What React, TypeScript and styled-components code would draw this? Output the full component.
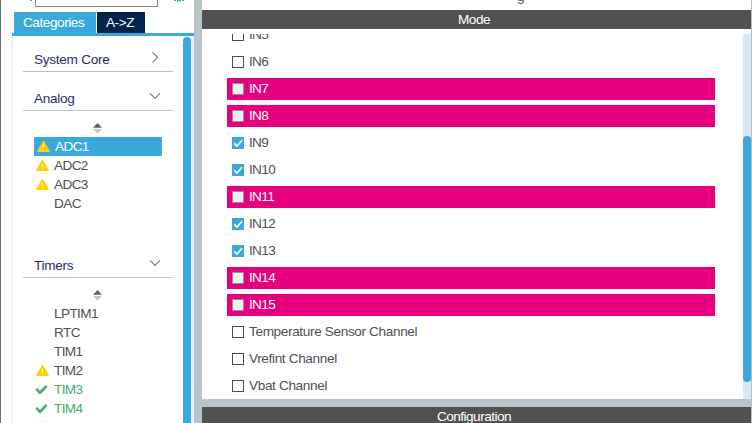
import React from "react";
import styled, { createGlobalStyle } from "styled-components";

const GlobalStyle = createGlobalStyle`
  * { box-sizing: border-box; }
  body { margin: 0; background: #fff; overflow: hidden; }
`;

const Shell = styled.div`
  display: flex;
  width: 752px;
  height: 423px;
  overflow: hidden;
  background: #fff;
  border-left: 1px solid #6d6d70;
  font-family: "Liberation Sans", Arial, sans-serif;
  font-size: 13.6px;
  line-height: 19px;
  color: #505054;
  white-space: nowrap;
`;

const Sidebar = styled.aside`
  display: flex;
  flex-direction: column;
  width: 193px;
  padding-left: 10px;
`;

const SearchRow = styled.div`
  display: flex;
  height: 12px;
  flex: none;
  padding-left: 18px;
`;

const HandleIcon = styled.svg`
  width: 4px;
  height: 2px;
  margin-right: 2px;
`;

const SearchBox = styled.div`
  width: 123px;
  height: 7px;
  border: 1px solid #85898c;
  border-top: 0;
`;

const GearIcon = styled.svg`
  width: 12px;
  height: 3px;
  margin-left: 15px;
`;

const Tabs = styled.div`
  display: flex;
  flex: none;
  gap: 1px;
  height: 24px;
  margin-left: 1px;
  padding-left: 2px;
  border-bottom: 3px solid #3ba8dc;
`;

const Tab = styled.div<{ $active?: boolean }>`
  width: ${(p) => (p.$active ? 82 : 48)}px;
  height: 21px;
  line-height: 21px;
  padding-left: 9px;
  letter-spacing: -0.45px;
  color: #fff;
  background: ${(p) => (p.$active ? "#3ba8dc" : "#03234b")};
`;

const TreeArea = styled.div`
  display: flex;
  flex: 1;
  min-height: 0;
  border-left: 2px solid #f0f0f0;
`;

const Tree = styled.div`
  width: 170px;
  height: 387px;
  overflow: hidden;
`;

const TreeTrack = styled.div`
  width: 11px;
  height: 387px;
  padding-top: 1px;
  background: linear-gradient(to right, #fff 0 8px, #eef0f1 8px);
`;

const TreeThumb = styled.div`
  width: 8px;
  height: 400px;
  border-radius: 4px;
  background: #3ba8dc;
`;

const GroupHeader = styled.div<{ $first?: boolean }>`
  display: flex;
  justify-content: space-between;
  align-items: flex-start;
  height: ${(p) => (p.$first ? 36 : 39)}px;
  margin: 0 0 0 10px;
  width: 150px;
  padding: ${(p) => (p.$first ? "14px 12px 0 11px" : "17px 12px 0 11px")};
  border-bottom: 1px solid #b9c4ca;
  color: #1f2e68;
  letter-spacing: -0.28px;
`;

const Chevron = styled.svg`
  width: 12px;
  height: 12px;
  margin-top: 1px;
  flex: none;
`;

const Sorter = styled.div`
  display: flex;
  height: 26px;
  padding: 12px 0 0 80px;
`;

const Items = styled.div`
  margin-left: 21px;
  width: 128px;
`;

const Item = styled.div<{ $selected?: boolean; $ok?: boolean }>`
  display: flex;
  align-items: center;
  height: 19px;
  padding-left: ${(p) => (p.$selected ? 3 : p.$ok ? 1 : 2)}px;
  letter-spacing: -0.62px;
  background: ${(p) => (p.$selected ? "#3ba8dc" : "transparent")};
  color: ${(p) => (p.$selected ? "#fff" : p.$ok ? "#3fae6c" : "#505054")};
`;

const StatusSlot = styled.span<{ $ok?: boolean }>`
  display: flex;
  width: 15px;
  height: 13px;
  margin-right: ${(p) => (p.$ok ? 4 : 3)}px;
`;

const GroupGap = styled.div`
  height: 26px;
`;

const Splitter = styled.div<{ $horizontal?: boolean }>`
  flex: none;
  background: #b9c4ca;
  width: ${(p) => (p.$horizontal ? "auto" : "8px")};
  height: ${(p) => (p.$horizontal ? "8px" : "auto")};
`;

const Main = styled.main`
  display: flex;
  flex-direction: column;
  width: 550px;
  border-right: 1px solid #b3bfc6;
`;

const TitleStrip = styled.div`
  height: 10px;
  flex: none;
  display: flex;
  align-items: flex-end;
  overflow: hidden;
  padding: 0 0 6px 315px;
  line-height: 15px;
`;

const Bar = styled.div`
  flex: none;
  height: 19px;
  line-height: 19px;
  text-align: center;
  padding-right: 5px;
  letter-spacing: -0.52px;
  color: #fff;
  background: #505250;
`;

const ModeBody = styled.div`
  display: flex;
  justify-content: space-between;
  height: 365px;
  margin-top: 5px;
  flex: none;
`;

const ChannelList = styled.div`
  width: 488px;
  margin-left: 25px;
  height: 365px;
  overflow: hidden;
  display: flex;
  flex-direction: column;
  gap: 5px;
`;

const Channel = styled.div<{ $conflict?: boolean; $clipped?: boolean }>`
  display: flex;
  flex: none;
  align-items: center;
  gap: 5px;
  height: 22px;
  margin-top: ${(p) => (p.$clipped ? -10 : 0)}px;
  padding-left: 5px;
  color: ${(p) => (p.$conflict ? "#fff" : "#505054")};
  background: ${(p) => (p.$conflict ? "#e6007e" : "transparent")};
`;

const ChannelName = styled.span<{ $pin: boolean }>`
  padding-bottom: 2px;
  letter-spacing: ${(p) => (p.$pin ? -0.66 : -0.36)}px;
`;

const Check = styled.span<{ $state: State }>`
  display: flex;
  width: 12px;
  height: 12px;
  border: 1px solid
    ${(p) => (p.$state === "on" ? "#3ba8dc" : p.$state === "conflict" ? "#8f8f94" : "#4b4c4e")};
  background: ${(p) => (p.$state === "on" ? "#3ba8dc" : p.$state === "conflict" ? "#f0f0f2" : "#fff")};
`;

const Track = styled.div`
  width: 8px;
  padding-top: 102px;
  background: #dae8f5;
`;

const Thumb = styled.div`
  height: 246px;
  border-radius: 4px;
  background: #3ba8dc;
`;

type State = "off" | "on" | "conflict";
type Status = "warn" | "ok" | "none";

const WarnIcon = () => (
  <svg width="13" height="13" viewBox="0 0 13 13">
    <path d="M6.5 1.8 12 11.2H1Z" fill="#ffd200" stroke="#ffd200" strokeWidth="1.6" strokeLinejoin="round" />
    <path d="M6.5 4.6V8.4M6.5 9.5V10.7" stroke="#fff3b0" strokeWidth="1.1" />
  </svg>
);

const OkIcon = () => (
  <svg width="13" height="13" viewBox="0 0 13 13">
    <path d="M1.2 5.9 5 9.8 11.6 3" fill="none" stroke="#49b170" strokeWidth="2.7" />
  </svg>
);

const SortIcon = () => (
  <svg width="9" height="12" viewBox="0 0 9 12">
    <path d="M4.5 0 8.9 4.8H0.1Z" fill="#606060" />
    <path d="M4.5 10.8 8.9 6H0.1Z" fill="#c8c8c8" />
  </svg>
);

const GroupChevron = ({ open }: { open?: boolean }) => (
  <Chevron viewBox="0 0 12 12">
    <path
      d={open ? "M1 3.3 6 8.3 11 3.3" : "M3.5 1.3 8.5 6.3 3.5 11.3"}
      fill="none"
      stroke="#77797c"
      strokeWidth="1.2"
    />
  </Chevron>
);

const analog: [string, Status][] = [
  ["ADC1", "warn"],
  ["ADC2", "warn"],
  ["ADC3", "warn"],
  ["DAC", "none"],
];

const timers: [string, Status][] = [
  ["LPTIM1", "none"],
  ["RTC", "none"],
  ["TIM1", "none"],
  ["TIM2", "warn"],
  ["TIM3", "ok"],
  ["TIM4", "ok"],
  ["TIM5", "warn"],
];

const channels: [string, State][] = [
  ["IN5", "off"],
  ["IN6", "off"],
  ["IN7", "conflict"],
  ["IN8", "conflict"],
  ["IN9", "on"],
  ["IN10", "on"],
  ["IN11", "conflict"],
  ["IN12", "on"],
  ["IN13", "on"],
  ["IN14", "conflict"],
  ["IN15", "conflict"],
  ["Temperature Sensor Channel", "off"],
  ["Vrefint Channel", "off"],
  ["Vbat Channel", "off"],
];

const Peripherals = ({ items, selected }: { items: [string, Status][]; selected?: string }) => (
  <>
    <Sorter>
      <SortIcon />
    </Sorter>
    <Items>
      {items.map(([name, status]) => (
        <Item key={name} $selected={name === selected} $ok={status === "ok"}>
          <StatusSlot $ok={status === "ok"}>
            {status === "warn" && <WarnIcon />}
            {status === "ok" && <OkIcon />}
          </StatusSlot>
          {name}
        </Item>
      ))}
    </Items>
  </>
);

export default function App() {
  return (
    <>
      <GlobalStyle />
      <Shell>
        <Sidebar>
          <SearchRow>
            <HandleIcon viewBox="0 0 4 2">
              <path d="M1 0H3V1H1Z" fill="#3ba8dc" />
            </HandleIcon>
            <SearchBox />
            <GearIcon viewBox="0 0 12 3">
              <path d="M1 0H3V1H1ZM4 0H8V1.8H7V1.2H5V1.8H4ZM9 0H11V1H9Z" fill="#3ba8dc" />
            </GearIcon>
          </SearchRow>
          <Tabs>
            <Tab $active>Categories</Tab>
            <Tab>A-&gt;Z</Tab>
          </Tabs>
          <TreeArea>
            <Tree>
              <GroupHeader $first>
                System Core
                <GroupChevron />
              </GroupHeader>
              <GroupHeader>
                Analog
                <GroupChevron open />
              </GroupHeader>
              <Peripherals items={analog} selected="ADC1" />
              <GroupGap />
              <GroupHeader>
                Timers
                <GroupChevron open />
              </GroupHeader>
              <Peripherals items={timers} />
            </Tree>
            <TreeTrack>
              <TreeThumb />
            </TreeTrack>
          </TreeArea>
        </Sidebar>
        <Splitter />
        <Main>
          <TitleStrip>g</TitleStrip>
          <Bar>Mode</Bar>
          <ModeBody>
            <ChannelList>
              {channels.map(([name, state], i) => (
                <Channel key={name} $conflict={state === "conflict"} $clipped={i === 0}>
                  <Check $state={state}>
                    {state === "on" && (
                      <svg width="10" height="10" viewBox="0 0 10 10">
                        <path d="M1.2 5.3 4 8 9 2.2" fill="none" stroke="#fff" strokeWidth="1.6" />
                      </svg>
                    )}
                  </Check>
                  <ChannelName $pin={name.startsWith("IN")}>{name}</ChannelName>
                </Channel>
              ))}
            </ChannelList>
            <Track>
              <Thumb />
            </Track>
          </ModeBody>
          <Splitter $horizontal />
          <Bar>Configuration</Bar>
        </Main>
      </Shell>
    </>
  );
}
